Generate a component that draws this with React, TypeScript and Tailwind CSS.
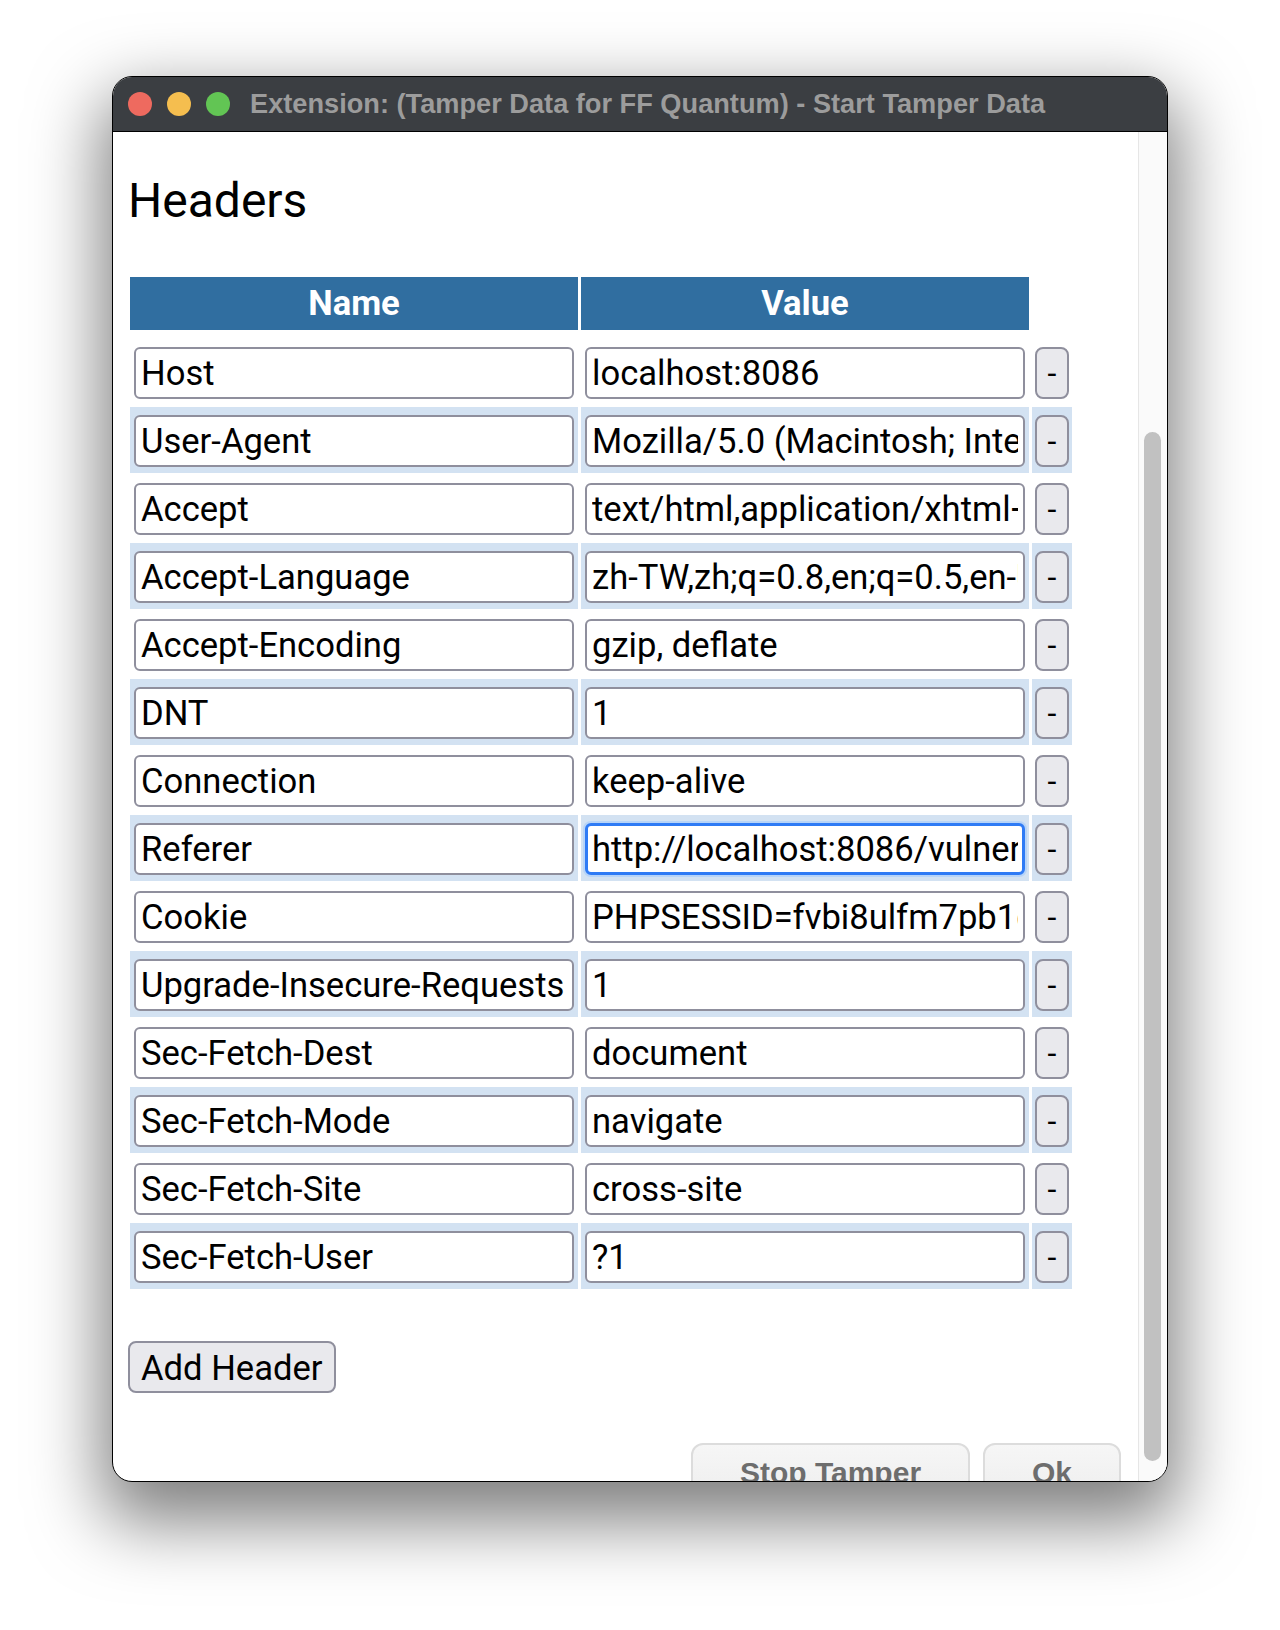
import React from 'react';

const headers = [
  { name: 'Host', value: 'localhost:8086' },
  { name: 'User-Agent', value: 'Mozilla/5.0 (Macintosh; Intel Mac OS X 10.15; rv:109.0) Gecko/20100101 Firefox/115.0' },
  { name: 'Accept', value: 'text/html,application/xhtml+xml,application/xml;q=0.9,image/webp,*/*;q=0.8' },
  { name: 'Accept-Language', value: 'zh-TW,zh;q=0.8,en;q=0.5,en-US;q=0.3' },
  { name: 'Accept-Encoding', value: 'gzip, deflate' },
  { name: 'DNT', value: '1' },
  { name: 'Connection', value: 'keep-alive' },
  { name: 'Referer', value: 'http://localhost:8086/vulnerabilities/csrf/' },
  { name: 'Cookie', value: 'PHPSESSID=fvbi8ulfm7pb1q2t3k9s0a6d4e; security=low' },
  { name: 'Upgrade-Insecure-Requests', value: '1' },
  { name: 'Sec-Fetch-Dest', value: 'document' },
  { name: 'Sec-Fetch-Mode', value: 'navigate' },
  { name: 'Sec-Fetch-Site', value: 'cross-site' },
  { name: 'Sec-Fetch-User', value: '?1' },
];

function HeaderRow({ name, value, alt, focused }: { name: string; value: string; alt: boolean; focused: boolean }) {
  const cell = alt ? 'bg-[#d3e2f2]' : 'bg-white';
  return (
    <div className="flex gap-[3px]">
      <div className={`w-[448px] px-[4px] pt-[8px] pb-[6px] ${cell}`}>
        <input
          readOnly
          value={name}
          className="w-full h-[52px] px-[5px] border-2 border-[#8f8f9d] rounded-[6px] bg-white text-black text-[34.6px] outline-none"
        />
      </div>
      <div className={`w-[448px] px-[4px] pt-[8px] pb-[6px] ${cell}`}>
        <input
          readOnly
          value={value}
          className={
            focused
              ? 'w-full h-[52px] px-[4px] border-[3px] border-[#2f7bf5] rounded-[6px] bg-white text-black text-[34.6px] outline-none shadow-[0_0_0_2px_#b7d4f8]'
              : 'w-full h-[52px] px-[5px] border-2 border-[#8f8f9d] rounded-[6px] bg-white text-black text-[34.6px] outline-none'
          }
        />
      </div>
      <div className={`w-[40px] px-[3px] pt-[8px] pb-[6px] ${cell}`}>
        <button className="w-[34px] h-[52px] border-2 border-[#8f8f9d] rounded-[8px] bg-[#e9e9ed] text-[32px] leading-none text-black">
          -
        </button>
      </div>
    </div>
  );
}

export default function App() {
  return (
    <div className="w-[1280px] h-[1630px] bg-white pt-[76px] pl-[112px] font-['Roboto',sans-serif]">
      <div className="w-[1056px] h-[1406px] flex flex-col overflow-hidden rounded-[20px] border border-black bg-white shadow-[0_30px_70px_10px_rgba(0,0,0,0.5)]">
        {/* title bar */}
        <div className="h-[55px] shrink-0 flex items-center pl-[15px] bg-[#3b3e42] border-b border-black">
          <div className="flex gap-[15px]">
            <span className="w-[24px] h-[24px] rounded-full bg-[#ee6a5f]" />
            <span className="w-[24px] h-[24px] rounded-full bg-[#f5be4f]" />
            <span className="w-[24px] h-[24px] rounded-full bg-[#62c554]" />
          </div>
          <span className="ml-[20px] text-[27.2px] font-bold text-[#9c9c9c] font-['Liberation_Sans',Arial,sans-serif] whitespace-nowrap">
            Extension: (Tamper Data for FF Quantum) - Start Tamper Data
          </span>
        </div>

        <div className="flex flex-1 min-h-0">
          <div className="flex-1 min-w-0 overflow-hidden pl-[15px] pt-[41px]">
            <h1 className="text-[48px] leading-[56px] font-normal text-black">Headers</h1>

            <div className="ml-[2px] mt-[48px]">
              <div className="flex gap-[3px]">
                <div className="w-[448px] h-[53px] flex items-center justify-center bg-[#306ea0] text-white font-bold text-[34.6px]">
                  Name
                </div>
                <div className="w-[448px] h-[53px] flex items-center justify-center bg-[#306ea0] text-white font-bold text-[34.6px]">
                  Value
                </div>
              </div>
              <div className="mt-[9px] flex flex-col gap-[2px]">
                {headers.map((h, i) => (
                  <HeaderRow key={h.name} name={h.name} value={h.value} alt={i % 2 === 1} focused={h.name === 'Referer'} />
                ))}
              </div>
            </div>

            <button className="mt-[52px] h-[52px] px-[11px] border-2 border-[#8f8f9d] rounded-[8px] bg-[#e9e9ed] text-[34.6px] text-black">
              Add Header
            </button>

            <div className="mt-[50px] pr-[17px] flex justify-end gap-[13px] font-['Liberation_Sans',Arial,sans-serif]">
              <button className="w-[279px] h-[70px] pt-[10px] flex justify-center items-start border-2 border-[#dcdcdc] rounded-[12px] bg-gradient-to-b from-[#f6f6f6] to-[#ececec] text-[30px] leading-[36px] font-bold text-[#6d6d6d]">
                Stop Tamper
              </button>
              <button className="w-[138px] h-[70px] pt-[10px] flex justify-center items-start border-2 border-[#dcdcdc] rounded-[12px] bg-gradient-to-b from-[#f6f6f6] to-[#ececec] text-[30px] leading-[36px] font-bold text-[#6d6d6d]">
                Ok
              </button>
            </div>
          </div>

          {/* scrollbar */}
          <div className="w-[29px] shrink-0 border-l border-[#e6e6e6] bg-[#fafafa] pt-[300px] pl-[5px]">
            <div className="w-[17px] h-[1029px] rounded-full bg-[#c1c1c1]" />
          </div>
        </div>
      </div>
    </div>
  );
}
